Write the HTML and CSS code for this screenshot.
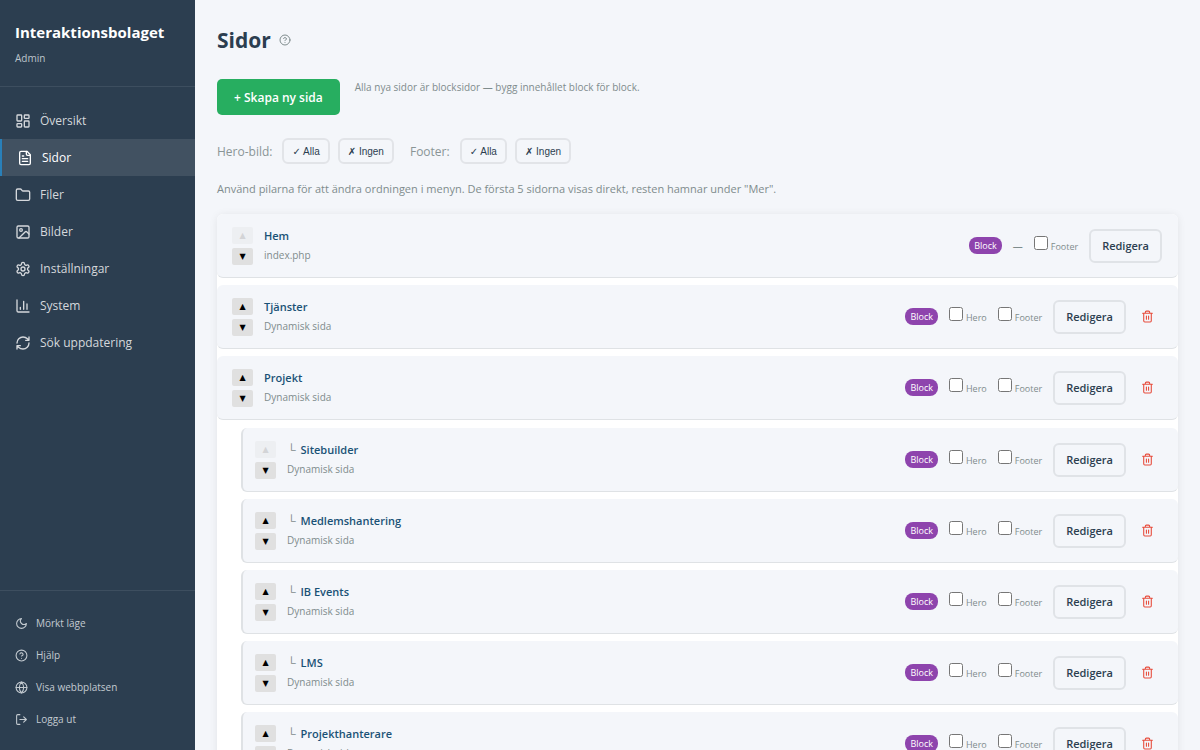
FILE: index.html
```
<!DOCTYPE html>
<html lang="sv">
  <head>
    <meta charset="utf-8">
    <meta name="viewport" content="width=device-width, initial-scale=1">
    <title>Sidor - Interaktionsbolaget</title>
    <link rel="stylesheet" href="styles.css">
  </head>
  <body>
    <svg class="sprite" aria-hidden="true">
      <symbol id="trash" viewBox="0 0 24 24">
        <path d="M3 6h18M19 6v14a2 2 0 0 1-2 2H7a2 2 0 0 1-2-2V6M8 6V4a2 2 0 0 1 2-2h4a2 2 0 0 1 2 2v2M10 11v6M14 11v6"/>
      </symbol>
      <symbol id="help" viewBox="0 0 24 24">
        <circle cx="12" cy="12" r="10"/>
        <path d="M9.1 9a3 3 0 0 1 5.8 1c0 2-3 3-3 3M12 17h.01"/>
      </symbol>
    </svg>

    <aside class="sidebar">
      <div class="brand">
        <strong>Interaktionsbolaget</strong>
        <span>Admin</span>
      </div>
      <nav class="menu">
        <a href="#">
          <svg viewBox="0 0 24 24"><rect x="3" y="3" width="7" height="9" rx="1"/><rect x="14" y="3" width="7" height="5" rx="1"/><rect x="14" y="12" width="7" height="9" rx="1"/><rect x="3" y="16" width="7" height="5" rx="1"/></svg>
          Översikt
        </a>
        <a href="#" class="active">
          <svg viewBox="0 0 24 24"><path d="M15 2H6a2 2 0 0 0-2 2v16a2 2 0 0 0 2 2h12a2 2 0 0 0 2-2V7Z"/><path d="M14 2v4a2 2 0 0 0 2 2h4M10 9H8M16 13H8M16 17H8"/></svg>
          Sidor
        </a>
        <a href="#">
          <svg viewBox="0 0 24 24"><path d="M20 20a2 2 0 0 0 2-2V8a2 2 0 0 0-2-2h-7.9a2 2 0 0 1-1.7-.9L9.6 3.9A2 2 0 0 0 7.9 3H4a2 2 0 0 0-2 2v13a2 2 0 0 0 2 2Z"/></svg>
          Filer
        </a>
        <a href="#">
          <svg viewBox="0 0 24 24"><rect x="3" y="3" width="18" height="18" rx="2"/><circle cx="9" cy="9" r="2"/><path d="m21 15-3.1-3.1a2 2 0 0 0-2.8 0L6 21"/></svg>
          Bilder
        </a>
        <a href="#">
          <svg viewBox="0 0 24 24"><path d="M12.2 2h-.4a2 2 0 0 0-2 2v.2a2 2 0 0 1-1 1.7l-.4.3a2 2 0 0 1-2 0l-.2-.1a2 2 0 0 0-2.7.7l-.2.4a2 2 0 0 0 .7 2.7l.2.1a2 2 0 0 1 1 1.7v.5a2 2 0 0 1-1 1.8l-.2.1a2 2 0 0 0-.7 2.7l.2.4a2 2 0 0 0 2.7.7l.2-.1a2 2 0 0 1 2 0l.4.3a2 2 0 0 1 1 1.7v.2a2 2 0 0 0 2 2h.4a2 2 0 0 0 2-2v-.2a2 2 0 0 1 1-1.7l.4-.3a2 2 0 0 1 2 0l.2.1a2 2 0 0 0 2.7-.7l.2-.4a2 2 0 0 0-.7-2.7l-.2-.1a2 2 0 0 1-1-1.8v-.5a2 2 0 0 1 1-1.7l.2-.1a2 2 0 0 0 .7-2.7l-.2-.4a2 2 0 0 0-2.7-.7l-.2.1a2 2 0 0 1-2 0l-.4-.3a2 2 0 0 1-1-1.7V4a2 2 0 0 0-2-2z"/><circle cx="12" cy="12" r="3"/></svg>
          Inställningar
        </a>
        <a href="#">
          <svg viewBox="0 0 24 24"><path d="M3 3v16a2 2 0 0 0 2 2h16M18 17V9M13 17V5M8 17v-3"/></svg>
          System
        </a>
        <a href="#">
          <svg viewBox="0 0 24 24"><path d="M3 12a9 9 0 0 1 9-9 9.8 9.8 0 0 1 6.7 2.7L21 8M21 3v5h-5M21 12a9 9 0 0 1-9 9 9.8 9.8 0 0 1-6.7-2.7L3 16M8 16H3v5"/></svg>
          Sök uppdatering
        </a>
      </nav>
      <div class="sidebar-footer">
        <a href="#">
          <svg viewBox="0 0 24 24"><path d="M12 3a6 6 0 0 0 9 9 9 9 0 1 1-9-9Z"/></svg>
          Mörkt läge
        </a>
        <a href="#">
          <svg viewBox="0 0 24 24"><use href="#help"/></svg>
          Hjälp
        </a>
        <a href="#">
          <svg viewBox="0 0 24 24"><circle cx="12" cy="12" r="10"/><path d="M12 2a14.5 14.5 0 0 0 0 20 14.5 14.5 0 0 0 0-20M2 12h20"/></svg>
          Visa webbplatsen
        </a>
        <a href="#">
          <svg viewBox="0 0 24 24"><path d="M9 21H5a2 2 0 0 1-2-2V5a2 2 0 0 1 2-2h4M16 17l5-5-5-5M21 12H9"/></svg>
          Logga ut
        </a>
      </div>
    </aside>

    <main>
      <header class="page-head">
        <h1>Sidor</h1>
        <a href="#" class="help" aria-label="Hjälp"><svg viewBox="0 0 24 24"><use href="#help"/></svg></a>
      </header>

      <div class="create">
        <button type="button" class="btn-create">+ Skapa ny sida</button>
        <p>Alla nya sidor är blocksidor — bygg innehållet block för block.</p>
      </div>

      <div class="bulk">
        <span>Hero-bild:</span>
        <button type="button">✓ Alla</button>
        <button type="button">✗ Ingen</button>
        <span class="second">Footer:</span>
        <button type="button">✓ Alla</button>
        <button type="button">✗ Ingen</button>
      </div>

      <p class="hint">Använd pilarna för att ändra ordningen i menyn. De första 5 sidorna visas direkt, resten hamnar under "Mer".</p>

      <ul class="pages">
        <li>
          <div class="row">
            <div class="arrows"><button type="button" aria-label="Flytta upp" disabled>▲</button><button type="button" aria-label="Flytta ner">▼</button></div>
            <div class="info"><a href="#">Hem</a><small>index.php</small></div>
            <span class="badge">Block</span>
            <span class="none">—</span>
            <label><input type="checkbox">Footer</label>
            <div class="actions"><button type="button" class="edit">Redigera</button></div>
          </div>
        </li>
        <li>
          <div class="row">
            <div class="arrows"><button type="button" aria-label="Flytta upp">▲</button><button type="button" aria-label="Flytta ner">▼</button></div>
            <div class="info"><a href="#">Tjänster</a><small>Dynamisk sida</small></div>
            <span class="badge">Block</span>
            <label><input type="checkbox">Hero</label>
            <label><input type="checkbox">Footer</label>
            <div class="actions"><button type="button" class="edit">Redigera</button><button type="button" class="delete" aria-label="Ta bort"><svg viewBox="0 0 24 24"><use href="#trash"/></svg></button></div>
          </div>
        </li>
        <li>
          <div class="row">
            <div class="arrows"><button type="button" aria-label="Flytta upp">▲</button><button type="button" aria-label="Flytta ner">▼</button></div>
            <div class="info"><a href="#">Projekt</a><small>Dynamisk sida</small></div>
            <span class="badge">Block</span>
            <label><input type="checkbox">Hero</label>
            <label><input type="checkbox">Footer</label>
            <div class="actions"><button type="button" class="edit">Redigera</button><button type="button" class="delete" aria-label="Ta bort"><svg viewBox="0 0 24 24"><use href="#trash"/></svg></button></div>
          </div>
          <ul class="children">
            <li class="row">
              <div class="arrows"><button type="button" aria-label="Flytta upp" disabled>▲</button><button type="button" aria-label="Flytta ner">▼</button></div>
              <div class="info"><a href="#">Sitebuilder</a><small>Dynamisk sida</small></div>
              <span class="badge">Block</span>
              <label><input type="checkbox">Hero</label>
              <label><input type="checkbox">Footer</label>
              <div class="actions"><button type="button" class="edit">Redigera</button><button type="button" class="delete" aria-label="Ta bort"><svg viewBox="0 0 24 24"><use href="#trash"/></svg></button></div>
            </li>
            <li class="row">
              <div class="arrows"><button type="button" aria-label="Flytta upp">▲</button><button type="button" aria-label="Flytta ner">▼</button></div>
              <div class="info"><a href="#">Medlemshantering</a><small>Dynamisk sida</small></div>
              <span class="badge">Block</span>
              <label><input type="checkbox">Hero</label>
              <label><input type="checkbox">Footer</label>
              <div class="actions"><button type="button" class="edit">Redigera</button><button type="button" class="delete" aria-label="Ta bort"><svg viewBox="0 0 24 24"><use href="#trash"/></svg></button></div>
            </li>
            <li class="row">
              <div class="arrows"><button type="button" aria-label="Flytta upp">▲</button><button type="button" aria-label="Flytta ner">▼</button></div>
              <div class="info"><a href="#">IB Events</a><small>Dynamisk sida</small></div>
              <span class="badge">Block</span>
              <label><input type="checkbox">Hero</label>
              <label><input type="checkbox">Footer</label>
              <div class="actions"><button type="button" class="edit">Redigera</button><button type="button" class="delete" aria-label="Ta bort"><svg viewBox="0 0 24 24"><use href="#trash"/></svg></button></div>
            </li>
            <li class="row">
              <div class="arrows"><button type="button" aria-label="Flytta upp">▲</button><button type="button" aria-label="Flytta ner">▼</button></div>
              <div class="info"><a href="#">LMS</a><small>Dynamisk sida</small></div>
              <span class="badge">Block</span>
              <label><input type="checkbox">Hero</label>
              <label><input type="checkbox">Footer</label>
              <div class="actions"><button type="button" class="edit">Redigera</button><button type="button" class="delete" aria-label="Ta bort"><svg viewBox="0 0 24 24"><use href="#trash"/></svg></button></div>
            </li>
            <li class="row">
              <div class="arrows"><button type="button" aria-label="Flytta upp">▲</button><button type="button" aria-label="Flytta ner">▼</button></div>
              <div class="info"><a href="#">Projekthanterare</a><small>Dynamisk sida</small></div>
              <span class="badge">Block</span>
              <label><input type="checkbox">Hero</label>
              <label><input type="checkbox">Footer</label>
              <div class="actions"><button type="button" class="edit">Redigera</button><button type="button" class="delete" aria-label="Ta bort"><svg viewBox="0 0 24 24"><use href="#trash"/></svg></button></div>
            </li>
          </ul>
        </li>
      </ul>
    </main>
  </body>
</html>
```
FILE: styles.css
```
* {
  box-sizing: border-box;
}
body {
  margin: 0;
  display: flex;
  align-items: flex-start;
  background: #f4f6fa;
  color: #2c3e50;
  font-family: "Segoe UI", "Open Sans", "Noto Sans", sans-serif;
  font-size: 12px;
}
svg {
  fill: none;
  stroke: currentColor;
  stroke-width: 2;
  stroke-linecap: round;
  stroke-linejoin: round;
  flex: none;
}
.sprite {
  display: none;
}
a {
  color: inherit;
  text-decoration: none;
}
p, h1, ul {
  margin: 0;
}
ul {
  padding: 0;
  list-style: none;
}
button {
  cursor: pointer;
}

/* sidebar */
.sidebar {
  position: sticky;
  top: 0;
  flex: none;
  display: flex;
  flex-direction: column;
  width: 195px;
  height: 100vh;
  background: #2c3e50;
  color: #d5d8dc;
}
.brand {
  padding: 22px 15px 20px;
  border-bottom: 1px solid #3d4e5f;
}
.brand strong {
  display: block;
  font-size: 15px;
  line-height: 20px;
  color: #fff;
}
.brand span {
  display: block;
  margin-top: 8px;
  font-size: 10px;
  line-height: 16px;
  color: #bdc5cc;
}
.menu {
  flex: 1;
  padding-top: 15px;
}
.menu a {
  display: flex;
  align-items: center;
  gap: 9px;
  height: 37px;
  padding: 0 15px;
}
.menu svg {
  width: 16px;
  height: 16px;
}
.menu .active {
  border-left: 2px solid #2980b9;
  background: #415161;
  color: #fff;
}
.sidebar-footer {
  padding: 16px 0 15px;
  border-top: 1px solid #3d4e5f;
}
.sidebar-footer a {
  display: flex;
  align-items: center;
  gap: 8px;
  height: 32px;
  padding: 0 15px;
  font-size: 10px;
  color: #c3cad0;
}
.sidebar-footer svg {
  width: 13px;
  height: 13px;
}

/* content */
main {
  flex: 1;
  min-width: 0;
  padding: 22px;
}
.page-head {
  display: flex;
  align-items: center;
  gap: 8px;
  margin-bottom: 21px;
}
h1 {
  font-size: 21px;
  line-height: 36px;
}
.help {
  color: #7f8c8d;
}
.help svg {
  display: block;
  width: 12px;
  height: 12px;
}
.create {
  display: flex;
  gap: 15px;
  margin-bottom: 23px;
}
.btn-create {
  height: 36px;
  padding: 0 17px;
  border: 0;
  border-radius: 5px;
  background: #27ae60;
  color: #fff;
  font: 600 12px "Segoe UI", "Open Sans", "Noto Sans", sans-serif;
}
.create p {
  font-size: 10px;
  line-height: 16px;
  color: #7f8c8d;
}
.bulk {
  display: flex;
  align-items: center;
  gap: 8px;
  margin-bottom: 16px;
  color: #8a9596;
}
.bulk span {
  margin-right: 2px;
}
.bulk .second {
  margin-left: 8px;
}
.bulk button {
  height: 26px;
  padding: 0 8px;
  border: 2px solid #e2e4e8;
  border-radius: 6px;
  background: transparent;
  color: #2c3e50;
  font: 10px "Liberation Sans", "DejaVu Sans", sans-serif;
}
.hint {
  margin-bottom: 16px;
  font-size: 11px;
  line-height: 18px;
  color: #7f8c8d;
}

/* page list */
.pages {
  display: flex;
  flex-direction: column;
  gap: 7px;
  border-radius: 6px;
  background: #fff;
  box-shadow: 0 1px 8px rgba(0, 0, 0, .08);
}
.row {
  display: flex;
  align-items: center;
  gap: 11px;
  min-height: 64px;
  padding: 0 16px 0 15px;
  border-bottom: 1px solid #dfe2e5;
  border-radius: 6px;
  background: #f4f6fa;
}
.children {
  display: flex;
  flex-direction: column;
  gap: 7px;
  margin: 8px 0 0 24px;
}
.children .row {
  padding-left: 12px;
  border-left: 2px solid #dfe2e5;
}
.arrows {
  display: flex;
  flex-direction: column;
  gap: 4px;
}
.arrows button {
  width: 21px;
  height: 17px;
  padding: 0;
  border: 0;
  border-radius: 2px;
  background: #e0e0e0;
  color: #000;
  font: 8px/17px "DejaVu Sans", sans-serif;
}
.arrows button:disabled {
  opacity: .3;
  color: #888;
}
.info {
  flex: 1;
}
.info a {
  display: block;
  font-size: 11px;
  font-weight: 600;
  line-height: 20px;
  color: #1a5276;
}
.children .info a::before {
  content: "└";
  margin-right: 5px;
  font-size: 12px;
  font-weight: 400;
  color: #7f8c8d;
}
.info small {
  display: block;
  font-size: 10px;
  line-height: 19px;
  color: #7f8c8d;
}
.badge {
  padding: 0 5px;
  border-radius: 8px;
  background: #8e44ad;
  color: #fff;
  font-size: 9px;
  line-height: 17px;
}
.none {
  font-size: 10px;
  color: #7f8c8d;
}
.row label {
  display: flex;
  align-items: flex-end;
  gap: 3px;
  padding-bottom: 2px;
  font-size: 9px;
  line-height: 14px;
  color: #7f8c8d;
}
.row input {
  width: 14px;
  height: 14px;
  margin: 0 0 4px;
}
.actions {
  display: flex;
  align-items: center;
  gap: 7px;
}
.edit {
  height: 34px;
  padding: 0 11px;
  border: 2px solid #e0e3e7;
  border-radius: 6px;
  background: transparent;
  color: #2c3e50;
  font: 600 11px "Segoe UI", "Open Sans", "Noto Sans", sans-serif;
}
.delete {
  padding: 8px;
  border: 0;
  background: transparent;
  color: #e74c3c;
}
.delete svg {
  display: block;
  width: 13px;
  height: 13px;
}
```
